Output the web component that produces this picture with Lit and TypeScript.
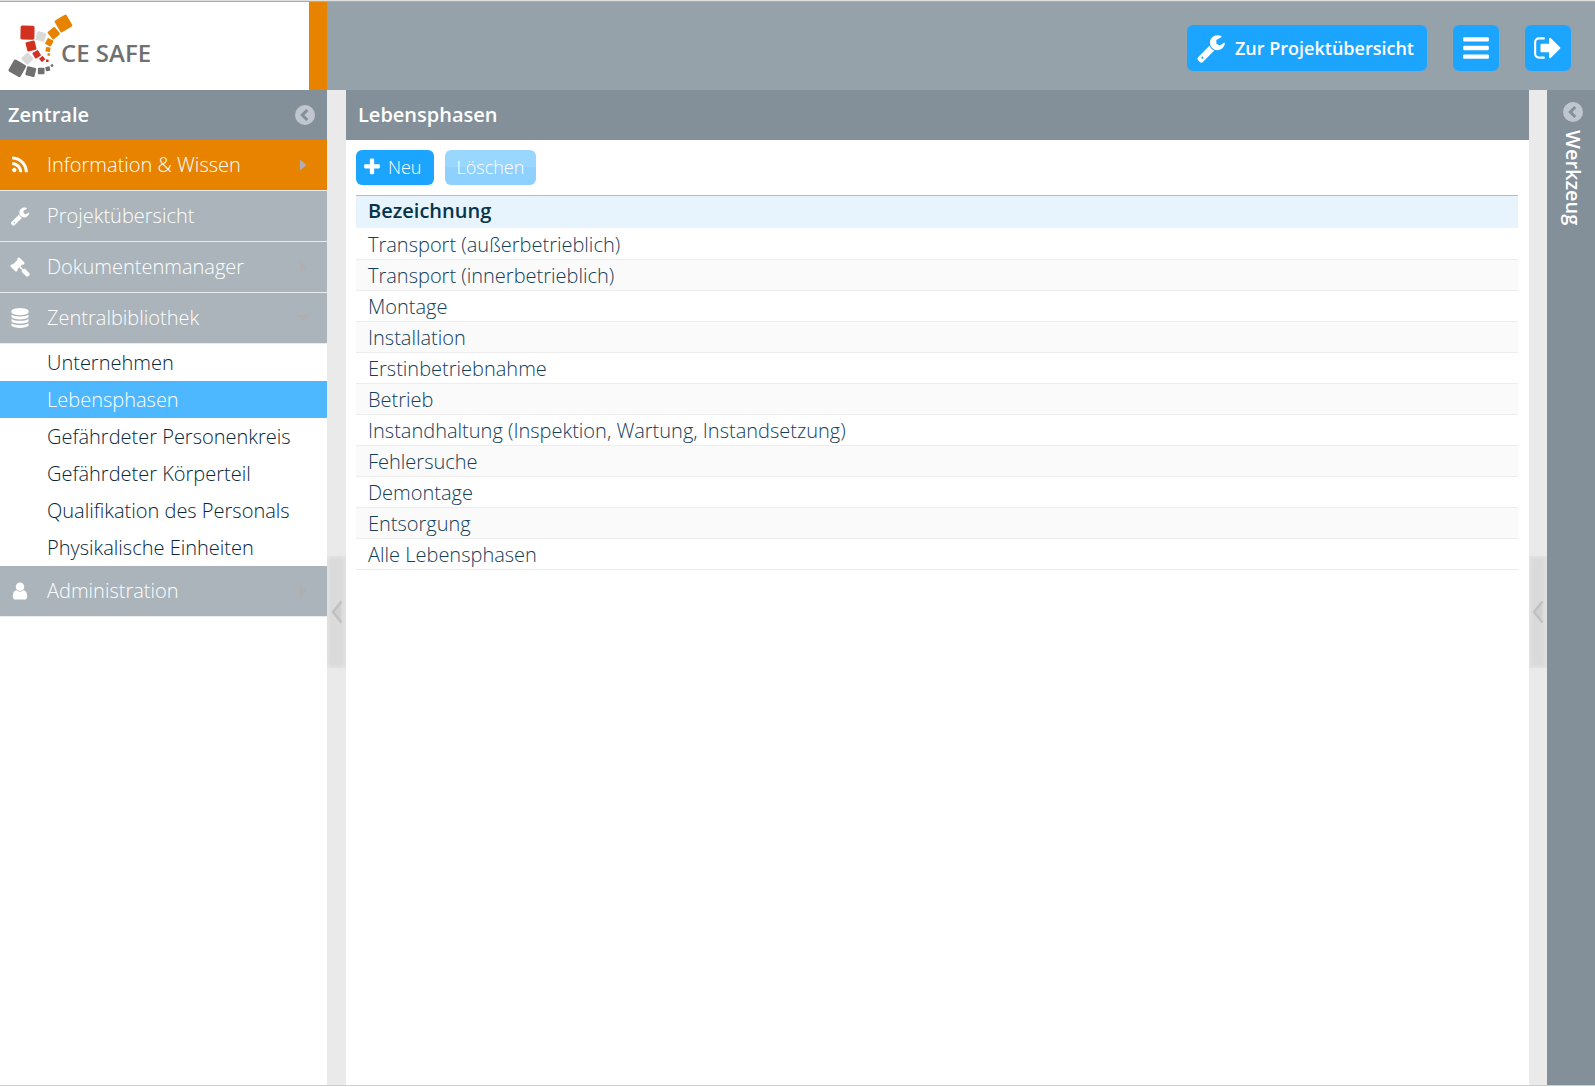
import { LitElement, html, css, svg, nothing } from "lit";
import { customElement, state } from "lit/decorators.js";
import { classMap } from "lit/directives/class-map.js";

const ICONS: Record<string, string> = {
  rss: "M576 1344q0 80-56 136t-136 56-136-56-56-136 56-136 136-56 136 56 56 136zm512 123q2 28-17 48-18 21-47 21h-135q-25 0-43-16.5t-20-41.5q-22-229-184.5-391.5t-391.5-184.5q-25-2-41.5-20t-16.5-43v-135q0-29 21-47 17-17 43-17h5q160 13 306 80.5t259 181.5q114 113 181.5 259t80.5 306zm512 2q2 27-18 47-18 20-46 20h-143q-26 0-44.5-17.5t-19.5-42.5q-12-215-101-408.5t-231.5-336-336-231.5-408.5-102q-25-1-42.5-19.5t-17.5-43.5v-143q0-28 20-46 18-18 44-18h3q262 13 501.5 120t425.5 294q187 186 294 425.5t120 501.5z",
  wrench: "M448 1472q0-26-19-45t-45-19-45 19-19 45 19 45 45 19 45-19 19-45zm644-420l-682 682q-37 37-90 37-52 0-91-37l-106-108q-38-36-38-90 0-53 38-91l681-681q39 98 114.500 173.500t173.500 114.500zm634-435q0 39-23 106-47 134-164.500 217.500t-258.500 83.500q-185 0-316.500-131.500t-131.500-316.500 131.500-316.500 316.500-131.500q58 0 121.500 16.500t107.500 46.500q16 11 16 28t-16 28l-293 169v224l193 107q5-3 79-48.500t135.500-81 70.500-35.500q15 0 23.500 10t8.500 25z",
  gavel: "M1771 1536q0 53-37 90l-107 108q-39 37-91 37-53 0-90-37l-363-364q-38-36-38-90 0-53 43-96l-256-256-126 126q-14 14-34 14t-34-14q2 2 12.5 12t12.5 13 10 11.5 10 13.5 6 13.5 5.5 16.5 1.5 18q0 38-28 68-3 3-16.5 18t-19 20.5-18.5 16.5-22 15.5-22 9-26 4.5q-40 0-68-28l-408-408q-28-28-28-68 0-13 4.5-26t9-22 15.5-22 16.500-18.500 20.500-19 18-16.500q30-28 68-28 10 0 18 1.500t16.500 5.500 13.500 6 13.500 10 11.500 10 13 12.500 12 12.500q-14-14-14-34t14-34l348-348q14-14 34-14t34 14q-2-2-12.500-12t-12.500-13-10-11.500-10-13.500-6-13.500-5.500-16.500-1.500-18q0-38 28-68 3-3 16.500-18t19-20.500 18.500-16.500 22-15.500 22-9 26-4.500q40 0 68 28l408 408q28 28 28 68 0 13-4.500 26t-9 22-15.500 22-16.500 18.500-20.500 19-18 16.500q-30 28-68 28-10 0-18-1.500t-16.500-5.500-13.500-6-13.500-10-11.500-10-13-12.500-12-12.500q14 14 14 34t-14 34l-126 126 256 256q43-43 96-43 52 0 91 37l363 363q37 39 37 91z",
  database: "M896 768q237 0 443-43t325-127v170q0 69-103 128t-280 93.5-385 34.5-385-34.5-280-93.5-103-128v-170q119 84 325 127t443 43zm0 768q237 0 443-43t325-127v170q0 69-103 128t-280 93.5-385 34.5-385-34.5-280-93.5-103-128v-170q119 84 325 127t443 43zm0-384q237 0 443-43t325-127v170q0 69-103 128t-280 93.5-385 34.5-385-34.5-280-93.5-103-128v-170q119 84 325 127t443 43zm0-1152q208 0 385 34.5t280 93.5 103 128v128q0 69-103 128t-280 93.5-385 34.5-385-34.5-280-93.5-103-128v-128q0-69 103-128t280-93.5 385-34.5z",
  user: "M1536 1399q0 109-62.5 187t-150.5 78h-854q-88 0-150.5-78t-62.5-187q0-85 8.500-160.500t31.500-152 58.500-131 94-89 134.500-34.500q131 128 313 128t313-128q76 0 134.500 34.500t94 89 58.500 131 31.500 152 8.500 160.500zm-256-887q0 159-112.500 271.500t-271.500 112.500-271.500-112.500-112.500-271.500 112.500-271.500 271.500-112.500 271.500 112.500 112.500 271.500z",
  plus: "M1600 736v192q0 40-28 68t-68 28h-416v416q0 40-28 68t-68 28h-192q-40 0-68-28t-28-68v-416h-416q-40 0-68-28t-28-68v-192q0-40 28-68t68-28h416v-416q0-40 28-68t68-28h192q40 0 68 28t28 68v416h416q40 0 68 28t28 68z",
  bars: "M1664 1344v128q0 26-19 45t-45 19h-1408q-26 0-45-19t-19-45v-128q0-26 19-45t45-19h1408q26 0 45 19t19 45zm0-512v128q0 26-19 45t-45 19h-1408q-26 0-45-19t-19-45v-128q0-26 19-45t45-19h1408q26 0 45 19t19 45zm0-512v128q0 26-19 45t-45 19h-1408q-26 0-45-19t-19-45v-128q0-26 19-45t45-19h1408q26 0 45 19t19 45z",
  signOut: "M704 1440q0 4 1 20t.5 26.5-3 23.5-10 19.5-20.5 6.5h-320q-119 0-203.5-84.5t-84.5-203.5v-704q0-119 84.5-203.5t203.5-84.5h320q13 0 22.5 9.5t9.5 22.5q0 4 1 20t.5 26.5-3 23.5-10 19.5-20.5 6.5h-320q-66 0-113 47t-47 113v704q0 66 47 113t113 47h312l11.5 1 11.5 3 8 5.5 7 9 2 13.5zm928-544q0 26-19 45l-544 544q-19 19-45 19t-45-19-19-45v-288h-448q-26 0-45-19t-19-45v-384q0-26 19-45t45-19h448v-288q0-26 19-45t45-19 45 19l544 544q19 19 19 45z",
};

const icon = (name: string, size: number) => html`
  <svg width=${size} height=${size} viewBox="0 0 1792 1792" fill="currentColor" aria-hidden="true">
    <path d=${ICONS[name]}></path>
  </svg>`;

const collapseIcon = html`
  <svg width="20" height="20" viewBox="0 0 20 20" aria-hidden="true">
    <circle cx="10" cy="10" r="10" fill="#c0c6cd"></circle>
    <path d="M12.300 5 L7.300 10 L12.300 15" fill="none" stroke="#839099" stroke-width="3"></path>
  </svg>`;

/** Logo tiles: centre x, centre y, edge length, rotation, fill. */
const TILES: [number, number, number, number, string][] = [
  [63.500, 23.500, 13.800, -31, "#e88300"],
  [53.800, 33.200, 9.400, -40, "#e88300"],
  [49.300, 42.300, 6.600, -62, "#e88300"],
  [48, 49.500, 4.600, 10, "#e88300"],
  [48.800, 54.500, 2.600, 0, "#e88300"],
  [27.500, 32.700, 14, 1, "#d23021"],
  [31, 46, 9.400, -14, "#d23021"],
  [36.700, 54.300, 6.600, -32, "#d23021"],
  [42.200, 59, 4.600, -42, "#d23021"],
  [47.300, 60.800, 2.600, 0, "#d23021"],
  [40.800, 36.500, 9.200, 15, "#dadada"],
  [27.300, 58.600, 9.200, -45, "#dadada"],
  [17.300, 68.300, 13.800, 30, "#707070"],
  [30.800, 71.600, 9.400, 14, "#707070"],
  [41.200, 71, 6.600, 0, "#707070"],
  [47.800, 68.800, 4.400, -10, "#707070"],
  [52, 65.500, 2.400, -35, "#707070"],
];

interface NavItem {
  label: string;
  icon: string;
  caret?: "right" | "down";
  accent?: boolean;
  children?: string[];
}

const NAV: NavItem[] = [
  { label: "Information & Wissen", icon: "rss", caret: "right", accent: true },
  { label: "Projektübersicht", icon: "wrench" },
  { label: "Dokumentenmanager", icon: "gavel", caret: "right" },
  {
    label: "Zentralbibliothek",
    icon: "database",
    caret: "down",
    children: [
      "Unternehmen",
      "Lebensphasen",
      "Gefährdeter Personenkreis",
      "Gefährdeter Körperteil",
      "Qualifikation des Personals",
      "Physikalische Einheiten",
    ],
  },
  { label: "Administration", icon: "user", caret: "right" },
];

const PHASES = [
  "Transport (außerbetrieblich)",
  "Transport (innerbetrieblich)",
  "Montage",
  "Installation",
  "Erstinbetriebnahme",
  "Betrieb",
  "Instandhaltung (Inspektion, Wartung, Instandsetzung)",
  "Fehlersuche",
  "Demontage",
  "Entsorgung",
  "Alle Lebensphasen",
];

@customElement("side-nav")
export class SideNav extends LitElement {
  @state() private current = "Lebensphasen";

  static styles = css`
    :host {
      display: block;
      font-weight: 300;
    }
    .entry {
      display: grid;
      grid-template-columns: 39px 1fr 24px;
      align-items: center;
      width: 100%;
      height: 51px;
      padding: 0 12px 0 0;
      border: 0;
      border-bottom: 1px solid #ebebeb;
      background: #aab4ba;
      color: #fff;
      font: inherit;
      text-align: left;
      cursor: pointer;
    }
    .entry.accent {
      background: #e88300;
    }
    .entry svg {
      justify-self: center;
    }
    .label {
      padding-left: 8px;
    }
    .caret {
      justify-self: center;
      width: 7px;
      height: 12px;
      background: #b0aeae;
      clip-path: polygon(0 0, 100% 50%, 0 100%);
    }
    .caret.down {
      width: 12px;
      height: 7px;
      clip-path: polygon(0 0, 100% 0, 50% 100%);
    }
    .sub {
      margin: 0;
      padding: 0;
      list-style: none;
    }
    .link {
      display: block;
      padding-left: 47px;
      line-height: 37px;
      color: #06283a;
      text-decoration: none;
    }
    .link.current {
      background: #4db8ff;
      color: #fff;
    }
  `;

  private select(e: Event, name: string) {
    e.preventDefault();
    this.current = name;
  }

  render() {
    return html`<nav aria-label="Zentrale">
      ${NAV.map(
        (item) => html`
          <button class=${classMap({ entry: true, accent: !!item.accent })} type="button">
            ${icon(item.icon, 20)}
            <span class="label">${item.label}</span>
            ${item.caret
              ? html`<span class=${classMap({ caret: true, down: item.caret === "down" })}></span>`
              : nothing}
          </button>
          ${item.children
            ? html`<ul class="sub">
                ${item.children.map(
                  (c) => html`<li>
                    <a
                      class=${classMap({ link: true, current: c === this.current })}
                      href="#"
                      @click=${(e: Event) => this.select(e, c)}
                      >${c}</a
                    >
                  </li>`
                )}
              </ul>`
            : nothing}
        `
      )}
    </nav>`;
  }
}

@customElement("pane-splitter")
export class PaneSplitter extends LitElement {
  static styles = css`
    :host {
      display: flex;
      align-items: center;
      padding-top: 48px;
      background: #eaeaea;
    }
    .grip {
      display: flex;
      align-items: center;
      justify-content: center;
      width: 100%;
      height: 112px;
      padding: 0;
      border: 0;
      background: #dadada;
      box-shadow: inset 0 0 4px 1px #e6e6e6;
      cursor: col-resize;
    }
  `;

  render() {
    return html`<button class="grip" type="button" aria-label="Bereich ein- oder ausklappen">
      <svg width="12" height="24" viewBox="0 0 12 24" aria-hidden="true">
        <path d="M10 2 L2 12 L10 22 Z" fill="#d0d0d0"></path>
        <path d="M10.500 1.500 L2 12 L10.500 22.500" fill="none" stroke="#c0c0c0" stroke-width="2.400"></path>
      </svg>
    </button>`;
  }
}

@customElement("app-root")
export class AppRoot extends LitElement {
  static styles = css`
    :host {
      display: flex;
      flex-direction: column;
      box-sizing: border-box;
      min-height: 100vh;
      padding-bottom: 1px;
      background: #fff;
      font: 400 20px/24px "Open Sans", "Noto Sans", sans-serif;
      color: #06283a;
    }
    .top {
      display: flex;
      align-items: stretch;
      height: 88px;
      border-top: 1px solid #dfdfdf;
      box-shadow: inset 0 1px #a9acae;
      padding-top: 1px;
      background: #96a2aa;
    }
    .brand {
      display: flex;
      align-items: center;
      box-sizing: border-box;
      width: 327px;
      border-right: 18px solid #e88300;
      background: #fff;
      color: #707070;
      font-size: 24px;
      font-weight: 600;
      text-decoration: none;
    }
    .brand-mark {
      overflow: visible;
    }
    .brand-name {
      padding-top: 14px;
    }
    .actions {
      display: flex;
      flex: 1;
      align-items: center;
      justify-content: flex-end;
      gap: 26px;
      padding: 4px 24px 0 0;
    }
    .action {
      display: flex;
      align-items: center;
      justify-content: center;
      width: 46px;
      height: 46px;
      padding: 0;
      border: 0;
      border-radius: 6px;
      background: #1ca5ff;
      color: #fff;
      font: 600 18px/24px "Open Sans", "Noto Sans", sans-serif;
      cursor: pointer;
    }
    .action.wide {
      justify-content: flex-start;
      gap: 9px;
      width: 240px;
      padding-left: 9px;
    }
    .body {
      display: grid;
      grid-template-columns: 327px 19px minmax(0, 1fr) 18px 48px;
      flex: 1;
      border-bottom: 1px solid #cfcfc7;
    }
    .bar {
      display: flex;
      align-items: center;
      justify-content: space-between;
      height: 50px;
      padding: 0 12px 0 8px;
      background: #839099;
      color: #fff;
    }
    .title {
      margin: 0;
      font-size: 20px;
      font-weight: 600;
    }
    .content .bar {
      padding: 0 12px;
    }
    .round {
      display: flex;
      padding: 0;
      border: 0;
      background: none;
      cursor: pointer;
    }
    .panel {
      padding: 10px 11px 10px 10px;
    }
    .toolbar {
      display: flex;
      gap: 11px;
      margin-bottom: 10px;
    }
    .tool {
      display: flex;
      align-items: center;
      gap: 6px;
      height: 35px;
      padding: 0 12px 2px;
      border: 0;
      border-radius: 6px;
      background: #1ca5ff;
      color: #fff;
      font: 300 18px/24px "Open Sans", "Noto Sans", sans-serif;
      cursor: pointer;
    }
    .tool.primary {
      padding-left: 6px;
    }
    .tool:disabled {
      background: linear-gradient(#9ad7ff 50%, #8fd1fe 50%);
      cursor: default;
    }
    .grid {
      width: 100%;
      border-collapse: separate;
      border-spacing: 0;
      border-top: 1px solid #b5bcc0;
    }
    .head {
      height: 33px;
      padding: 0 12px 2px;
      box-sizing: border-box;
      border-bottom: 1px solid #fff;
      background: #e7f4fd;
      color: #06344a;
      font-weight: 600;
      text-align: left;
    }
    .cell {
      box-sizing: border-box;
      height: 31px;
      padding: 4px 12px 2px;
      border-bottom: 1px solid #ededed;
      font-weight: 300;
      color: #12405a;
    }
    .row:nth-child(even) {
      background: #fafafa;
    }
    .tools {
      display: flex;
      flex-direction: column;
      align-items: center;
      gap: 8px;
      padding: 12px 0 0 4px;
      background: #839099;
      color: #fff;
    }
    .vertical {
      writing-mode: vertical-rl;
    }
  `;

  render() {
    return html`
      <header class="top">
        <a class="brand" href="#">
          <svg class="brand-mark" width="61" height="88" viewBox="0 2 61 88" aria-hidden="true">
            ${TILES.map(
              ([x, y, s, r, fill]) => svg`<rect
                x=${x - s / 2} y=${y - s / 2} width=${s} height=${s} rx=${s / 8}
                fill=${fill} transform="rotate(${r} ${x} ${y})"></rect>`
            )}
          </svg>
          <span class="brand-name">CE SAFE</span>
        </a>
        <div class="actions">
          <button class="action wide" type="button">${icon("wrench", 30)}<span>Zur Projektübersicht</span></button>
          <button class="action" type="button" aria-label="Menü">${icon("bars", 30)}</button>
          <button class="action" type="button" aria-label="Abmelden">${icon("signOut", 30)}</button>
        </div>
      </header>
      <div class="body">
        <aside>
          <div class="bar">
            <h2 class="title">Zentrale</h2>
            <button class="round" type="button" aria-label="Zentrale einklappen">${collapseIcon}</button>
          </div>
          <side-nav></side-nav>
        </aside>
        <pane-splitter></pane-splitter>
        <main class="content">
          <div class="bar"><h1 class="title">Lebensphasen</h1></div>
          <div class="panel">
            <div class="toolbar">
              <button class="tool primary" type="button">${icon("plus", 20)}<span>Neu</span></button>
              <button class="tool" type="button" disabled>Löschen</button>
            </div>
            <table class="grid">
              <thead>
                <tr><th class="head" scope="col">Bezeichnung</th></tr>
              </thead>
              <tbody>
                ${PHASES.map((p) => html`<tr class="row"><td class="cell">${p}</td></tr>`)}
              </tbody>
            </table>
          </div>
        </main>
        <pane-splitter></pane-splitter>
        <aside class="tools">
          <button class="round" type="button" aria-label="Werkzeug ausklappen">${collapseIcon}</button>
          <h2 class="title vertical">Werkzeug</h2>
        </aside>
      </div>
    `;
  }
}
